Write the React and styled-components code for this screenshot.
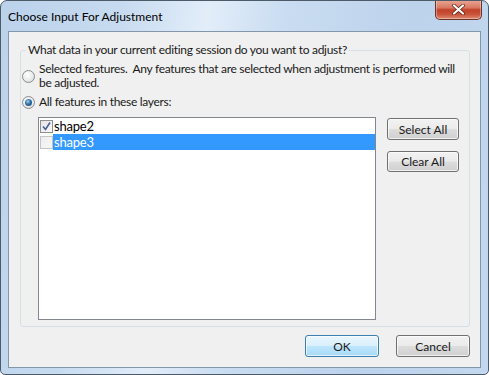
import React from "react"
import styled, { createGlobalStyle } from "styled-components"

const Global = createGlobalStyle`
  html, body {
    margin: 0;
    padding: 0;
    background: #fff;
  }
  body {
    font-family: Lato, "Liberation Sans", sans-serif;
    font-size: 12px;
    letter-spacing: -0.3px;
    color: #1a1a1a;
  }
`

const Window = styled.div`
  width: 489px;
  height: 375px;
  box-sizing: border-box;
  border: 1px solid #4d5a68;
  border-radius: 7px 7px 5px 5px;
  background: linear-gradient(100deg, #bbd2eb 0%, #c7dbf0 22%, #e2edf9 38%, #c9dcf1 52%, #bdd3ec 75%, #c3d8ee 100%);
  display: flex;
  flex-direction: column;
  overflow: hidden;
`

const TitleBar = styled.div`
  height: 30px;
  flex: none;
  display: flex;
  align-items: flex-start;
  padding: 0 6px 0 7px;
`

const Title = styled.div`
  margin-top: 8px;
  line-height: 16px;
  font-size: 12px;
  letter-spacing: 0;
  color: #000;
`

const CloseButton = styled.div`
  margin-left: auto;
  margin-top: -1px;
  width: 47px;
  height: 20px;
  box-sizing: border-box;
  border: 1px solid #6a3429;
  border-top: none;
  border-radius: 0 0 5px 5px;
  background: linear-gradient(#e9a897 0%, #d97a63 40%, #c2422a 52%, #c8533a 75%, #e08a70 100%);
  box-shadow: inset 0 0 0 1px rgba(255, 255, 255, 0.35);
  display: flex;
  align-items: center;
  justify-content: center;
`

const Client = styled.div`
  flex: 1;
  margin: 0 7px 7px;
  background: #f0f0f0;
  border: 1px solid #8396aa;
  display: flex;
  flex-direction: column;
  padding: 10px 10px 10px 11px;
`

const Group = styled.fieldset`
  margin: 0;
  padding: 0 10px 6px 1px;
  border: 1px solid #d5dfe5;
  border-radius: 3px;
  min-inline-size: auto;
  display: flex;
  flex-direction: column;
`

const Legend = styled.legend`
  margin-left: 4px;
  padding: 0 2px;
  line-height: 16px;
  font-size: 12px;
  white-space: nowrap;
`

const RadioRow = styled.div`
  display: flex;
  align-items: center;
  gap: 4px;
  line-height: 14px;
  white-space: nowrap;
  margin-top: ${(p) => p.$top}px;
`

const Radio = styled.span`
  width: 13px;
  height: 13px;
  flex: none;
  box-sizing: border-box;
  border-radius: 50%;
  border: 1px solid #8a8c8e;
  background: radial-gradient(circle at 40% 35%, #ffffff 0%, #eaeaea 55%, #cfd2d5 100%);
  display: flex;
  align-items: center;
  justify-content: center;

  &::after {
    content: "";
    display: ${(p) => (p.$checked ? "block" : "none")};
    width: 7px;
    height: 7px;
    border-radius: 50%;
    background: radial-gradient(circle at 40% 35%, #a9d0f0 0%, #2f6ea8 45%, #183f66 100%);
  }
`

const ListRow = styled.div`
  display: flex;
  align-items: flex-start;
  margin: 8px 0 0 16px;
`

const ListBox = styled.div`
  flex: 1;
  height: 203px;
  box-sizing: border-box;
  border: 1px solid #828790;
  background: #fff;
  padding-left: 1px;
`

const Item = styled.div`
  display: flex;
  align-items: center;
  height: 16px;
`

const CheckBox = styled.span`
  width: 13px;
  height: 13px;
  flex: none;
  box-sizing: border-box;
  border: 1px solid ${(p) => (p.$checked ? "#8f8f8f" : "#c4c4c4")};
  background: ${(p) =>
    p.$checked ? "linear-gradient(135deg, #e4e4e4, #fafafa)" : "linear-gradient(135deg, #ececec, #f8f8f8)"};
  display: flex;
  align-items: center;
  justify-content: center;
`

const ItemLabel = styled.span`
  flex: 1;
  height: 16px;
  line-height: 16px;
  padding-left: 1px;
  font-size: 13px;
  letter-spacing: -0.2px;
  background: ${(p) => (p.$selected ? "#3399ff" : "transparent")};
  color: ${(p) => (p.$selected ? "#fff" : "#000")};
`

const SideButtons = styled.div`
  display: flex;
  flex-direction: column;
  gap: 11px;
  margin: 1px 0 0 11px;
`

const Button = styled.div`
  width: ${(p) => p.$w}px;
  height: ${(p) => p.$h || 21}px;
  box-sizing: border-box;
  border: 1px solid ${(p) => (p.$default ? "#3c7fb1" : "#707070")};
  border-radius: 3px;
  background: ${(p) =>
    p.$default
      ? "linear-gradient(#eaf6fd 0%, #d9f0fc 48%, #bee6fd 52%, #a7d9f5 100%)"
      : "linear-gradient(#f2f2f2 0%, #ebebeb 48%, #dddddd 52%, #cfcfcf 100%)"};
  box-shadow: inset 0 0 0 1px rgba(255, 255, 255, 0.7);
  display: flex;
  align-items: center;
  justify-content: center;
  font-size: 12px;
  letter-spacing: 0;
`

const Footer = styled.div`
  display: flex;
  justify-content: flex-end;
  gap: 17px;
  margin-top: 8px;
`

export default function App() {
  return (
    <>
      <Global />
      <Window>
        <TitleBar>
          <Title>Choose Input For Adjustment</Title>
          <CloseButton>
            <svg width="13" height="11" viewBox="0 0 13 11">
              <path d="M2 1.5 L11 9.5 M11 1.5 L2 9.5" stroke="#5a1e14" strokeWidth="3.6" strokeLinecap="round" />
              <path d="M2 1.5 L11 9.5 M11 1.5 L2 9.5" stroke="#fff" strokeWidth="2.2" strokeLinecap="round" />
            </svg>
          </CloseButton>
        </TitleBar>
        <Client>
          <Group>
            <Legend>What data in your current editing session do you want to adjust?</Legend>
            <RadioRow $top={4}>
              <Radio />
              <span>
                Selected features.&nbsp; Any features that are selected when adjustment is performed will
                <br />
                be adjusted.
              </span>
            </RadioRow>
            <RadioRow $top={5}>
              <Radio $checked />
              <span>All features in these layers:</span>
            </RadioRow>
            <ListRow>
              <ListBox>
                <Item>
                  <CheckBox $checked>
                    <svg width="9" height="9" viewBox="0 0 9 9">
                      <path d="M1 4.5 L3.5 7.5 L8 0.5" fill="none" stroke="#4a5f97" strokeWidth="1.6" />
                    </svg>
                  </CheckBox>
                  <ItemLabel>shape2</ItemLabel>
                </Item>
                <Item>
                  <CheckBox />
                  <ItemLabel $selected>shape3</ItemLabel>
                </Item>
              </ListBox>
              <SideButtons>
                <Button $w={72} $h={22}>Select All</Button>
                <Button $w={72}>Clear All</Button>
              </SideButtons>
            </ListRow>
          </Group>
          <Footer>
            <Button $w={74} $h={22} $default>OK</Button>
            <Button $w={74} $h={22}>Cancel</Button>
          </Footer>
        </Client>
      </Window>
    </>
  )
}
